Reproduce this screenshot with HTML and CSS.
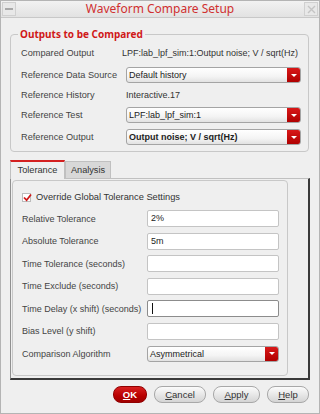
FILE: index.html
```html
<!DOCTYPE html>
<html>
<head>
<meta charset="utf-8">
<link rel="stylesheet" href="styles.css">
</head>
<body>
<div class="window">
  <div class="titlebar">
    <div class="tb-btn tb-min"><span class="dash"></span></div>
    <div class="tb-title">Waveform Compare Setup</div>
    <div class="tb-btn tb-close">
      <svg width="9" height="9" viewBox="0 0 9 9"><path d="M1 1L8 8M8 1L1 8" stroke="#c4c4c4" stroke-width="1.4"/></svg>
    </div>
  </div>

  <div class="group">
    <div class="group-title">Outputs to be Compared</div>
    <div class="grow r1">
      <span class="lbl">Compared Output</span>
      <span class="val val-out">LPF:lab_lpf_sim:1:Output noise; V / sqrt(Hz)</span>
    </div>
    <div class="grow r2">
      <span class="lbl">Reference Data Source</span>
      <div class="combo wide"><span class="ctext">Default history</span><span class="carrow"></span></div>
    </div>
    <div class="grow r3">
      <span class="lbl">Reference History</span>
      <span class="val">Interactive.17</span>
    </div>
    <div class="grow r2">
      <span class="lbl">Reference Test</span>
      <div class="combo wide"><span class="ctext">LPF:lab_lpf_sim:1</span><span class="carrow"></span></div>
    </div>
    <div class="grow r2">
      <span class="lbl">Reference Output</span>
      <div class="combo wide"><span class="ctext bold">Output noise; V / sqrt(Hz)</span><span class="carrow"></span></div>
    </div>
  </div>

  <div class="tabs">
    <div class="tab active">Tolerance</div>
    <div class="tab">Analysis</div>
  </div>
  <div class="pane">
    <div class="inner">
      <div class="check-row">
        <span class="checkbox">
          <svg width="9" height="9" viewBox="0 0 9 9"><path d="M1 4.5L3.6 7.2L8 1.5" stroke="#d01818" stroke-width="1.8" fill="none"/></svg>
        </span>
        <span class="check-label">Override Global Tolerance Settings</span>
      </div>
      <div class="frow"><span class="flbl">Relative Tolerance</span><div class="input">2%</div></div>
      <div class="frow"><span class="flbl">Absolute Tolerance</span><div class="input">5m</div></div>
      <div class="frow"><span class="flbl">Time Tolerance (seconds)</span><div class="input"></div></div>
      <div class="frow"><span class="flbl">Time Exclude (seconds)</span><div class="input"></div></div>
      <div class="frow"><span class="flbl">Time Delay (x shift) (seconds)</span><div class="input focus"><span class="caret"></span></div></div>
      <div class="frow"><span class="flbl">Bias Level (y shift)</span><div class="input"></div></div>
      <div class="frow"><span class="flbl">Comparison Algorithm</span><div class="combo narrow"><span class="ctext">Asymmetrical</span><span class="carrow"></span></div></div>
    </div>
  </div>

  <div class="buttons">
    <div class="btn ok"><u>O</u>K</div>
    <div class="btn"><u>C</u>ancel</div>
    <div class="btn"><u>A</u>pply</div>
    <div class="btn"><u>H</u>elp</div>
  </div>
</div>
</body>
</html>
```
FILE: styles.css
```css
* { box-sizing: border-box; }
html, body { margin: 0; padding: 0; }
body {
  width: 320px;
  height: 414px;
  background: #efefef;
  font-family: "Liberation Sans", Arial, sans-serif;
  font-size: 9px;
  color: #3c3c3c;
  overflow: hidden;
}
.window {
  width: 320px;
  height: 414px;
  border: 1px solid #b4b4b4;
  background: #efefef;
}
.titlebar {
  height: 17px;
  display: flex;
  align-items: stretch;
  background: linear-gradient(#f2f2f2, #e2e2e2);
  border-bottom: 1px solid #c8c8c8;
}
.tb-btn {
  width: 14px;
  margin: 1px;
  border: 1px solid #d0d0d0;
  background: #e8e8e8;
  display: flex;
  align-items: center;
  justify-content: center;
}
.tb-min { margin-left: 1px; }
.dash { width: 8px; height: 2px; background: #a8a8a8; display: block; }
.tb-title {
  flex: 1;
  text-align: center;
  color: #d03030;
  font-family: "Noto Sans", sans-serif;
  font-size: 12px;
  line-height: 15px;
}
.group {
  position: relative;
  margin: 16px 10px 0 9px;
  border: 1px solid #c8c8c8;
  border-radius: 4px;
  padding: 11px 0 5px 10px;
  height: 118px;
}
.group-title {
  position: absolute;
  top: -7px;
  left: 7px;
  padding: 0 2px;
  background: #efefef;
  color: #d01818;
  font-family: "Noto Sans", sans-serif;
  font-weight: bold;
  font-size: 10px;
  line-height: 12px;
}
.grow {
  display: flex;
  align-items: center;
}
.grow.r1 { height: 14px; margin-bottom: 7px; }
.grow.r2 { height: 16px; margin-bottom: 6px; }
.grow.r3 { height: 12px; margin-bottom: 6px; }
.lbl { width: 105px; flex: none; color: #444; white-space: nowrap; font-size: 9.2px; }
.val { color: #333; }
.val-out { margin-left: -4px; white-space: nowrap; }
.combo {
  height: 16px;
  display: flex;
  align-items: stretch;
  border: 1px solid #a4a4a4;
  border-radius: 3px;
  background: linear-gradient(#ffffff, #f4f4f4 60%, #e2e2e2);
  overflow: hidden;
}
.combo.wide { width: 175px; }
.combo.narrow { width: 132px; }
.ctext {
  flex: 1;
  padding-left: 2px;
  line-height: 14px;
  color: #222;
  white-space: nowrap;
}
.ctext.bold { font-weight: bold; }
.carrow {
  width: 13px;
  flex: none;
  background: linear-gradient(#d81818, #b00000);
  display: flex;
  align-items: center;
  justify-content: center;
}
.carrow::after {
  content: "";
  border-left: 3px solid transparent;
  border-right: 3px solid transparent;
  border-top: 3px solid #fff;
}
.tabs {
  display: flex;
  margin: 7px 0 0 9px;
  height: 19px;
  align-items: flex-end;
}
.tab {
  height: 17px;
  width: 46px;
  border: 1px solid #c0c0c0;
  border-bottom: none;
  background: #d8d8d8;
  line-height: 17px;
  color: #333;
  font-size: 9.2px;
  text-align: center;
}
.tab.active {
  height: 19px;
  width: 55px;
  background: #efefef;
  border-top: 2px solid #d42020;
  line-height: 16px;
  position: relative;
  top: 1px;
}
.pane {
  margin-left: 9px;
  width: 300px;
  height: 202px;
  border-top: 1px solid #c0c0c0;
  border-left: 1px solid #909090;
  border-right: 2px solid #3a3a3a;
  border-bottom: 2px solid #3a3a3a;
  padding: 1px 0 0 1px;
}
.inner {
  width: 276px;
  height: 196px;
  border: 1px solid #c8c8c8;
  border-radius: 4px;
  padding: 9px 8px 0 8px;
}
.check-row {
  height: 14px;
  display: flex;
  align-items: center;
  margin-bottom: 6px;
}
.checkbox {
  width: 9px;
  height: 9px;
  margin-left: 1px;
  border: 1px solid #bcbcbc;
  background: #fff;
  display: flex;
  align-items: center;
  justify-content: center;
  position: relative;
}
.checkbox svg { position: absolute; left: 0; top: -1px; }
.check-label { margin-left: 5px; font-size: 9.3px; color: #333; }
.frow {
  height: 17px;
  display: flex;
  align-items: center;
  margin-bottom: 5.5px;
}
.flbl { width: 126px; flex: none; padding-left: 1px; color: #444; white-space: nowrap; }
.input {
  width: 132px;
  height: 17px;
  border: 1px solid #c4c4c4;
  border-radius: 2px;
  background: #fff;
  padding-left: 3px;
  line-height: 15px;
  color: #222;
}
.input.focus { border-color: #8c8c8c; }
.caret {
  display: inline-block;
  width: 1px;
  height: 11px;
  background: #111;
  vertical-align: middle;
  margin-left: 1px;
}
.buttons {
  display: flex;
  justify-content: flex-end;
  gap: 7px;
  margin-top: 6px;
  padding-right: 10px;
}
.btn {
  height: 17px;
  border: 1px solid #a8a8a8;
  border-radius: 8px;
  background: linear-gradient(#fbfbfb, #e6e6e6 55%, #d4d4d4);
  color: #333;
  font-size: 9.5px;
  line-height: 15px;
  text-align: center;
  padding: 0;
}
.btn:nth-child(2) { width: 52px; }
.btn:nth-child(3) { width: 47px; }
.btn:nth-child(4) { width: 42px; }
.btn.ok {
  width: 34px;
  background: linear-gradient(#d82020, #b80000 60%, #a00000);
  border-color: #900000;
  color: #fff;
  font-weight: bold;
}
```
